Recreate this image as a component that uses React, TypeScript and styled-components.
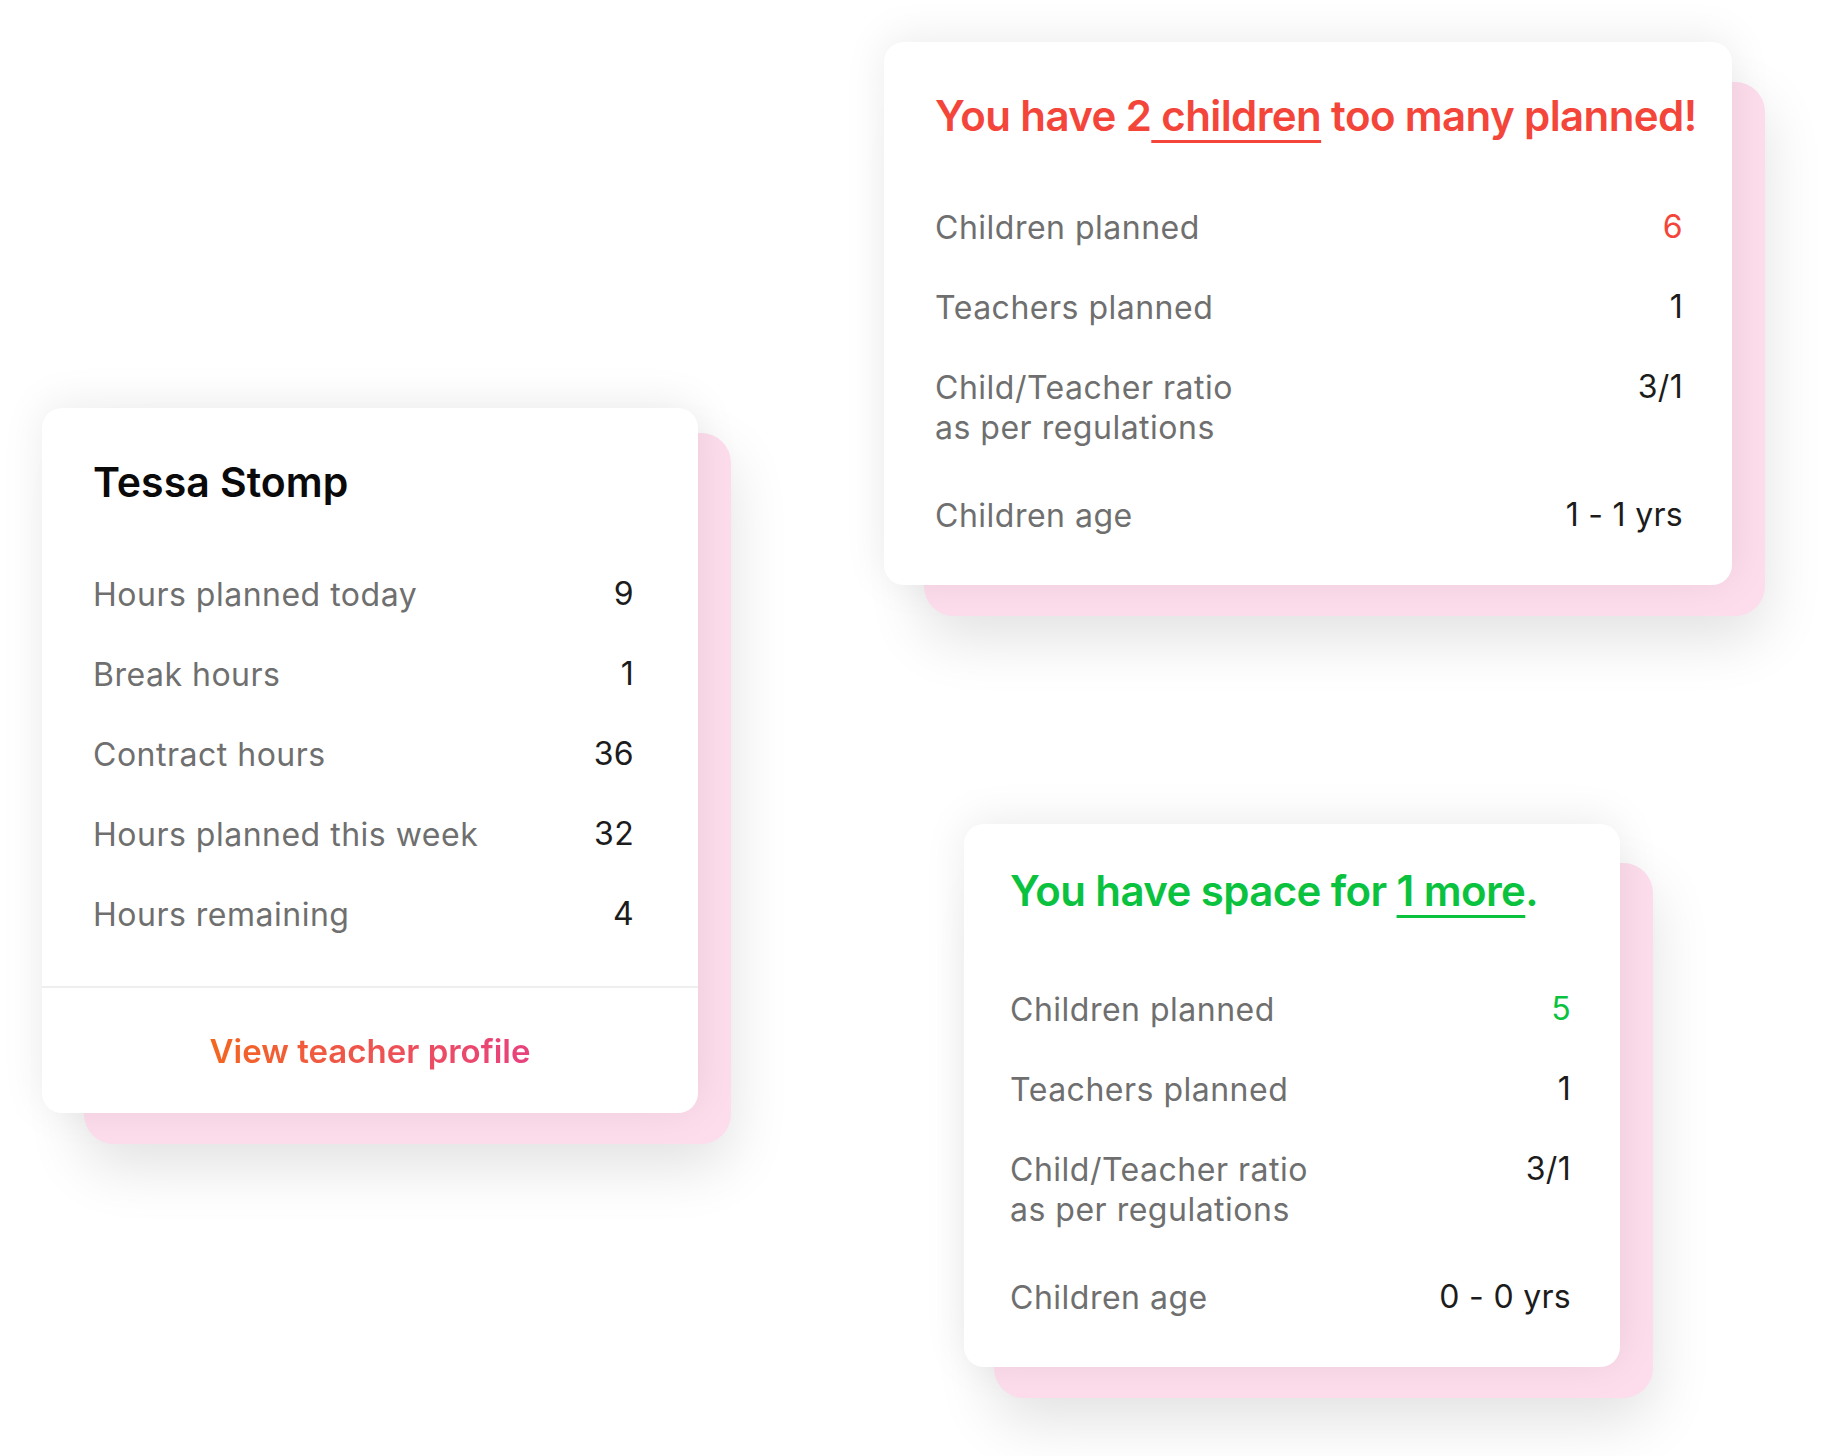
import styled, { createGlobalStyle } from "styled-components";

const GlobalStyle = createGlobalStyle`
  html, body {
    margin: 0;
    padding: 0;
    background: #ffffff;
  }
  body {
    font-family: "Inter", "Noto Sans", sans-serif;
    -webkit-font-smoothing: antialiased;
  }
`;

const Page = styled.div`
  width: 1824px;
  height: 1456px;
  display: flex;
  align-items: flex-start;
  overflow: hidden;
`;

const LeftCol = styled.div`
  padding: 408px 0 0 42px;
`;

const RightCol = styled.div`
  margin-left: 186px;
  padding-top: 42px;
  display: flex;
  flex-direction: column;
  align-items: flex-start;
`;

const Stack = styled.div<{ $w: number; $offL: number; $offT: number; $mt?: number; $ml?: number }>`
  position: relative;
  width: ${(p) => p.$w}px;
  margin-top: ${(p) => p.$mt ?? 0}px;
  margin-left: ${(p) => p.$ml ?? 0}px;

  &::before {
    content: "";
    position: absolute;
    left: ${(p) => p.$offL}px;
    top: ${(p) => p.$offT}px;
    right: -33px;
    bottom: -31px;
    background: #fddcec;
    border-radius: 30px;
    box-shadow: 0 22px 60px rgba(0, 0, 0, 0.12);
  }
`;

const Card = styled.div`
  position: relative;
  z-index: 1;
  background: #ffffff;
  border-radius: 20px;
  box-shadow: 0 -4px 44px rgba(0, 0, 0, 0.08);
  display: flex;
  flex-direction: column;
`;

const Body = styled.div<{ $pl: number; $pr: number; $pt: number; $pb: number }>`
  padding: ${(p) => `${p.$pt}px ${p.$pr}px ${p.$pb}px ${p.$pl}px`};
  display: flex;
  flex-direction: column;
`;

const Name = styled.h2`
  margin: 0;
  font-size: 41px;
  line-height: 48px;
  font-weight: 600;
  color: #0a0a0a;
  letter-spacing: 0;
`;

const Headline = styled.h2<{ $tone: "red" | "green" }>`
  margin: 0;
  font-size: 42px;
  line-height: 50px;
  font-weight: 600;
  letter-spacing: -0.6px;
  white-space: nowrap;
  color: ${(p) => (p.$tone === "red" ? "#f4453a" : "#0bc23f")};

  u {
    text-decoration: underline;
    text-decoration-thickness: 3px;
    text-underline-offset: 9px;
  }
`;

const Rows = styled.div<{ $mt: number }>`
  margin-top: ${(p) => p.$mt}px;
  display: flex;
  flex-direction: column;
  gap: 40px;
`;

const Row = styled.div<{ $extra?: number }>`
  display: flex;
  justify-content: space-between;
  align-items: flex-start;
  margin-bottom: ${(p) => p.$extra ?? 0}px;
`;

const Label = styled.span`
  font-size: 32px;
  line-height: 40px;
  color: #6f6f6f;
  font-weight: 400;
  letter-spacing: 0.5px;
`;

const Value = styled.span<{ $color?: string }>`
  font-size: 32px;
  line-height: 38px;
  color: ${(p) => p.$color ?? "#1c1c1c"};
  font-weight: 400;
  letter-spacing: 0.3px;
  white-space: nowrap;
`;

const Divider = styled.div`
  height: 2px;
  background: #eeeeee;
`;

const Footer = styled.div`
  height: 125px;
  display: flex;
  align-items: center;
  justify-content: center;
`;

const GradientLink = styled.a`
  font-size: 33px;
  font-weight: 600;
  letter-spacing: 0;
  background: linear-gradient(90deg, #f4661f 0%, #e8417f 100%);
  -webkit-background-clip: text;
  background-clip: text;
  color: transparent;
  cursor: pointer;
`;

type Stat = { label: string[]; value: string; color?: string; extra?: number };

const teacherStats: Stat[] = [
  { label: ["Hours planned today"], value: "9" },
  { label: ["Break hours"], value: "1" },
  { label: ["Contract hours"], value: "36" },
  { label: ["Hours planned this week"], value: "32" },
  { label: ["Hours remaining"], value: "4" },
];

const overStats: Stat[] = [
  { label: ["Children planned"], value: "6", color: "#f4453a" },
  { label: ["Teachers planned"], value: "1" },
  { label: ["Child/Teacher ratio", "as per regulations"], value: "3/1", extra: 8 },
  { label: ["Children age"], value: "1 - 1 yrs" },
];

const spaceStats: Stat[] = [
  { label: ["Children planned"], value: "5", color: "#0bc23f" },
  { label: ["Teachers planned"], value: "1" },
  { label: ["Child/Teacher ratio", "as per regulations"], value: "3/1", extra: 8 },
  { label: ["Children age"], value: "0 - 0 yrs" },
];

const StatRows = ({ stats, mt }: { stats: Stat[]; mt: number }) => (
  <Rows $mt={mt}>
    {stats.map((s) => (
      <Row key={s.label[0]} $extra={s.extra}>
        <Label>
          {s.label.map((line, i) => (
            <span key={line}>
              {i > 0 && <br />}
              {line}
            </span>
          ))}
        </Label>
        <Value $color={s.color}>{s.value}</Value>
      </Row>
    ))}
  </Rows>
);

const App = () => (
  <>
    <GlobalStyle />
    <Page>
      <LeftCol>
        <Stack $w={656} $offL={42} $offT={25}>
          <Card>
            <Body $pt={50} $pr={64} $pb={51} $pl={51}>
              <Name>Tessa Stomp</Name>
              <StatRows stats={teacherStats} mt={69} />
            </Body>
            <Divider />
            <Footer>
              <GradientLink>View teacher profile</GradientLink>
            </Footer>
          </Card>
        </Stack>
      </LeftCol>

      <RightCol>
        <Stack $w={848} $offL={40} $offT={40}>
          <Card>
            <Body $pt={49} $pr={49} $pb={49} $pl={51}>
              <Headline $tone="red">
                You have 2<u> children</u> too many planned!
              </Headline>
              <StatRows stats={overStats} mt={67} />
            </Body>
          </Card>
        </Stack>

        <Stack $w={656} $offL={30} $offT={39} $mt={239} $ml={80}>
          <Card>
            <Body $pt={42} $pr={49} $pb={49} $pl={46}>
              <Headline $tone="green">
                You have space for <u>1 more</u>.
              </Headline>
              <StatRows stats={spaceStats} mt={74} />
            </Body>
          </Card>
        </Stack>
      </RightCol>
    </Page>
  </>
);

export default App;
